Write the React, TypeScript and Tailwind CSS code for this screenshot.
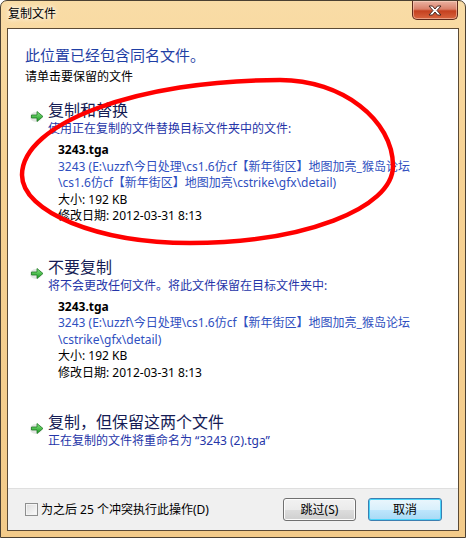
import React from "react";

function Arrow() {
  return (
    <svg width="15" height="13" viewBox="0 0 15 13" className="shrink-0">
      <defs>
        <linearGradient id="ag" x1="0" y1="0" x2="0" y2="1">
          <stop offset="0" stopColor="#8ce886" />
          <stop offset="1" stopColor="#17981f" />
        </linearGradient>
      </defs>
      <ellipse cx="6" cy="7" rx="6" ry="5" fill="#d8dcd8" opacity="0.7" />
      <path d="M1.5 5 H7 V1.5 L13 6.5 L7 11.5 V8 H1.5 Z" fill="url(#ag)" stroke="#1f7a25" strokeWidth="0.8" strokeLinejoin="round" />
    </svg>
  );
}

function FileInfo({ lines }: { lines: string[] }) {
  return (
    <div className="pl-[10px] text-[12px] leading-[16.5px]">
      <div className="font-bold text-black">3243.tga</div>
      {lines.map((l, i) => (
        <div key={i} className="text-[#2f4fc0]">{l}</div>
      ))}
      <div className="text-black">大小: 192 KB</div>
      <div className="text-black">修改日期: 2012-03-31 8:13</div>
    </div>
  );
}

function Section({ title, sub, children }: { title: string; sub: string; children?: React.ReactNode }) {
  return (
    <div className="flex pl-[22px]">
      <div className="w-[18px] pt-[10px]"><Arrow /></div>
      <div className="flex flex-col">
        <div className="text-[16px] leading-[20px] text-[#151c55]">{title}</div>
        <div className="text-[12px] leading-[16px] text-[#2535a8] mt-[1px]">{sub}</div>
        {children && <div className="mt-[5px]">{children}</div>}
      </div>
    </div>
  );
}

export default function App() {
  return (
    <div className="relative w-[466px] h-[538px] font-['Noto_Sans','Noto_Sans_CJK_SC',sans-serif] text-black">
      <div className="absolute inset-0 rounded-t-[7px] border border-[#4b4032] bg-[linear-gradient(180deg,#f9dca6_0%,#f6d294_30%,#f3cb8a_100%)]">
      </div>
      <div className="relative flex flex-col h-full">
        <div className="flex h-[28px] items-start justify-between">
          <div className="pl-[8px] pt-[6px] text-[12px] leading-[16px] text-black [text-shadow:0_0_6px_#fff,0_0_4px_#fff]">复制文件</div>
          <div className="mr-[8px] mt-[1px] flex h-[19px] w-[46px] items-center justify-center rounded-b-[5px] border border-t-0 border-[#5e2a1c] bg-[linear-gradient(180deg,#eab3a2_0%,#d9806a_45%,#c5401f_55%,#d8653f_100%)] shadow-[inset_0_0_0_1px_rgba(255,220,200,0.5)]">
            <svg width="14" height="11" viewBox="0 0 14 11">
              <path d="M1 1 H4.5 L7 4 L9.5 1 H13 L9 5.5 L13 10 H9.5 L7 7 L4.5 10 H1 L5 5.5 Z" fill="#fff" stroke="#4a2a22" strokeWidth="1" strokeLinejoin="round" />
            </svg>
          </div>
        </div>
        <div className="mx-[7px] mb-[7px] flex flex-1 flex-col border border-[#5b4a35] bg-white">
          <div className="flex flex-1 flex-col">
            <div className="pl-[17px] pt-[15px]">
              <div className="text-[15px] leading-[22px] text-[#1f3fa5]">此位置已经包含同名文件。</div>
              <div className="text-[12px] leading-[16px] mt-[3px]">请单击要保留的文件</div>
            </div>
            <div className="mt-[15px]">
              <Section title="复制和替换" sub="使用正在复制的文件替换目标文件夹中的文件:">
                <FileInfo lines={["3243 (E:\\uzzf\\今日处理\\cs1.6仿cf【新年街区】地图加亮_猴岛论坛", "\\cs1.6仿cf【新年街区】地图加亮\\cstrike\\gfx\\detail)"]} />
              </Section>
            </div>
            <div className="mt-[32px]">
              <Section title="不要复制" sub="将不会更改任何文件。将此文件保留在目标文件夹中:">
                <FileInfo lines={["3243 (E:\\uzzf\\今日处理\\cs1.6仿cf【新年街区】地图加亮_猴岛论坛", "\\cstrike\\gfx\\detail)"]} />
              </Section>
            </div>
            <div className="mt-[31px]">
              <Section title="复制，但保留这两个文件" sub="正在复制的文件将重命名为 “3243 (2).tga”" />
            </div>
          </div>
          <div className="flex h-[42px] items-center border-t border-[#dfdfdf] bg-[#f0f0f0] pl-[17px] pr-[16px]">
            <div className="h-[13px] w-[13px] border border-[#8e8f8f] bg-[linear-gradient(135deg,#dcdcdc,#fbfbfb)] shadow-[inset_0_0_0_1px_#f4f4f4]" />
            <span className="ml-[3px] text-[12px] leading-[16px]">为之后 25 个冲突执行此操作(D)</span>
            <div className="flex-1" />
            <div className="flex h-[23px] w-[73px] items-center justify-center rounded-[3px] border border-[#707070] bg-[linear-gradient(180deg,#f2f2f2_0%,#ebebeb_50%,#dddddd_51%,#cfcfcf_100%)] text-[12px] shadow-[inset_0_0_0_1px_#fcfcfc]">跳过(S)</div>
            <div className="ml-[12px] flex h-[23px] w-[74px] items-center justify-center rounded-[3px] border border-[#3c7fb1] bg-[linear-gradient(180deg,#eaf6fd_0%,#d9f0fc_50%,#bee6fd_51%,#a7d9f5_100%)] text-[12px] shadow-[inset_0_0_0_1px_#48d5fb]">取消</div>
          </div>
        </div>
      </div>
      <svg className="pointer-events-none absolute left-0 top-0" width="466" height="538">
        <path
          d="M22 175 C22 123 138 80 280 80 C342 80 393 120 393 166 C393 209 302 243 190 243 C98 243 22 212 22 175 Z"
          fill="none"
          stroke="#f00"
          strokeWidth="4.5"
        />
      </svg>
    </div>
  );
}
